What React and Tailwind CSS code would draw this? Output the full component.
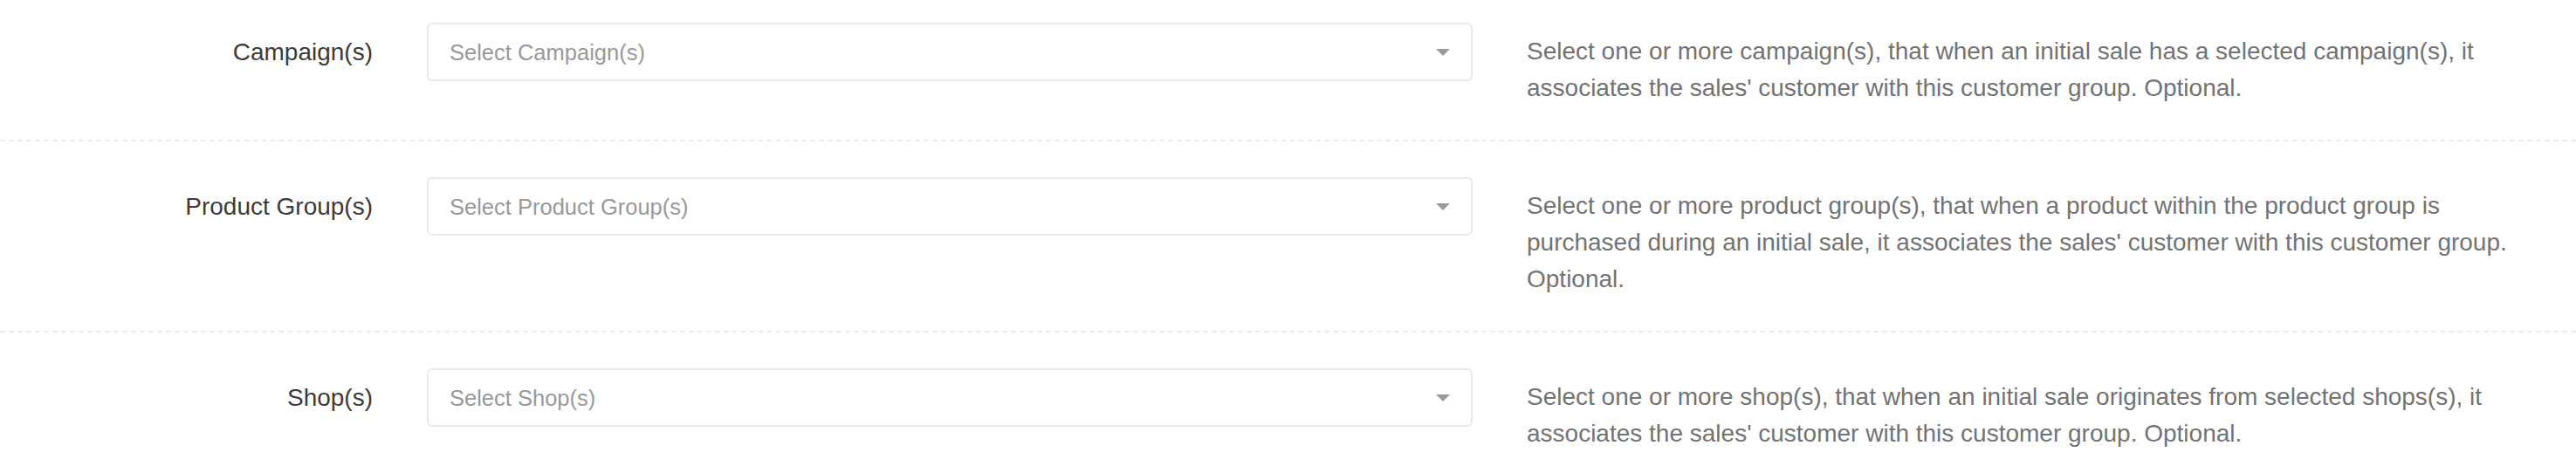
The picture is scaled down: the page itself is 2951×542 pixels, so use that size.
import React from 'react';

const rows = [
    {
        label: 'Campaign(s)',
        placeholder: 'Select Campaign(s)',
        help: "Select one or more campaign(s), that when an initial sale has a selected campaign(s), it associates the sales' customer with this customer group. Optional.",
    },
    {
        label: 'Product Group(s)',
        placeholder: 'Select Product Group(s)',
        help: "Select one or more product group(s), that when a product within the product group is purchased during an initial sale, it associates the sales' customer with this customer group. Optional.",
    },
    {
        label: 'Shop(s)',
        placeholder: 'Select Shop(s)',
        help: "Select one or more shop(s), that when an initial sale originates from selected shops(s), it associates the sales' customer with this customer group. Optional.",
    },
];

const SelectBox = ({ placeholder }) => (
    <div className="flex items-center justify-between h-[67px] border-2 border-[#e6e9ed] rounded-[6px] bg-white pl-[24px] pr-[24px]">
        <span className="text-[25.5px] text-[#999999]">{placeholder}</span>
        <svg width="16" height="8" viewBox="0 0 16 8" className="shrink-0">
            <path d="M0 0 L16 0 L8 8 Z" fill="#9a9a9a" />
        </svg>
    </div>
);

const App = () => {
    return (
        <div className="min-h-screen bg-white text-[28px] leading-[42px]" style={{ fontFamily: '"Liberation Sans", Arial, sans-serif' }}>
            {rows.map((row, i) => (
                <div
                    key={row.label}
                    className={`grid grid-cols-[427px_1198px_1fr] gap-x-[62px] pb-[38px] ${i === 0 ? 'pt-[26px]' : 'pt-[41px]'} ${i < rows.length - 1 ? 'border-b-2 border-dashed border-[#e9ecef]' : ''}`}
                >
                    <div className="text-right text-[#3b3b3b] pt-[13px]">{row.label}</div>
                    <SelectBox placeholder={row.placeholder} />
                    <div className="text-[#737373] pt-[12px] pr-[31px]">{row.help}</div>
                </div>
            ))}
        </div>
    );
};

export default App;
